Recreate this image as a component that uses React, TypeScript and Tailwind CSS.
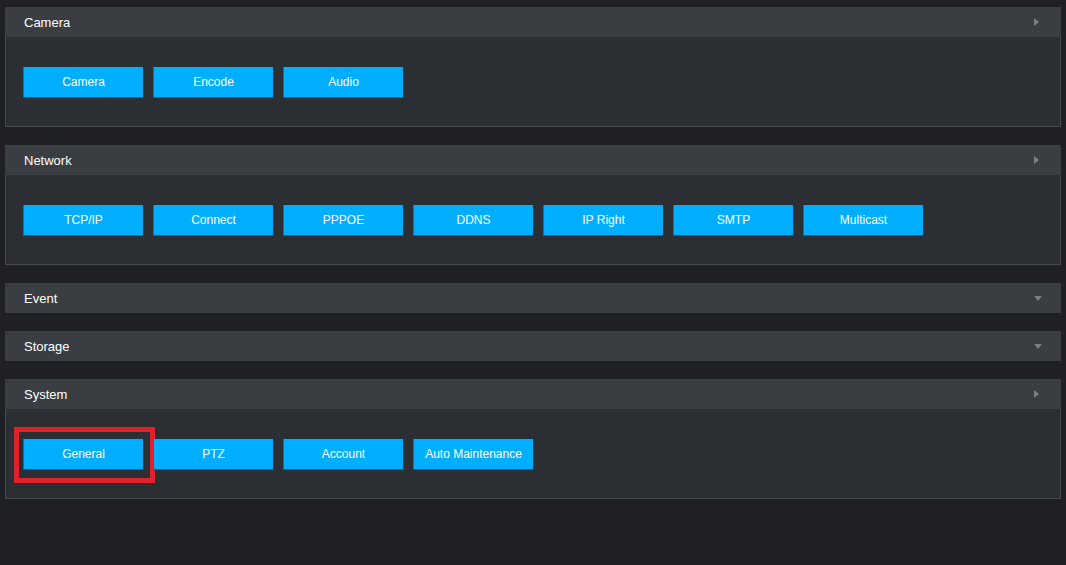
import React from "react";

type Panel = { title: string; open: boolean; buttons?: string[] };

const panels: Panel[] = [
  { title: "Camera", open: true, buttons: ["Camera", "Encode", "Audio"] },
  {
    title: "Network",
    open: true,
    buttons: ["TCP/IP", "Connect", "PPPOE", "DDNS", "IP Right", "SMTP", "Multicast"],
  },
  { title: "Event", open: false },
  { title: "Storage", open: false },
  { title: "System", open: true, buttons: ["General", "PTZ", "Account", "Auto Maintenance"] },
];

function Arrow({ open }: { open: boolean }) {
  if (open) {
    return (
      <span className="mr-[22px] h-0 w-0 border-y-[4px] border-l-[5px] border-y-transparent border-l-[#7b7e83]" />
    );
  }
  return (
    <span className="mr-[19px] h-0 w-0 border-x-[4.5px] border-t-[5px] border-x-transparent border-t-[#7b7e83]" />
  );
}

export default function App() {
  return (
    <div
      className="flex min-h-[565px] w-full flex-col gap-[18px] bg-[#1f2024] px-[5px] pt-[7px]"
      style={{ fontFamily: '"Liberation Sans", Arial, sans-serif' }}
    >
      {panels.map((p) => (
        <div key={p.title} className="flex flex-col">
          <div className="flex h-[30px] items-center justify-between bg-[#3a3d42] pl-[19px]">
            <span className="pt-[2px] text-[13px] text-white">{p.title}</span>
            <Arrow open={p.open} />
          </div>
          {p.buttons && (
            <div className="flex gap-[10px] border-x border-b border-[#46494e] bg-[#2b2e33] pb-[29px] pl-[17px] pt-[30px]">
              {p.buttons.map((b) => (
                <div key={b} className="relative">
                  <button className="flex h-[30px] w-[120px] items-center justify-center border-l border-[#1b6f99] bg-[#00aeff] text-[12px] text-white shadow-[0_1px_0_#1a5f82]">
                    {b}
                  </button>
                  {b === "General" && (
                    <div className="pointer-events-none absolute -left-[9px] -top-[12px] h-[56px] w-[141px] border-[5px] border-[#e3202a]" />
                  )}
                </div>
              ))}
            </div>
          )}
        </div>
      ))}
    </div>
  );
}
